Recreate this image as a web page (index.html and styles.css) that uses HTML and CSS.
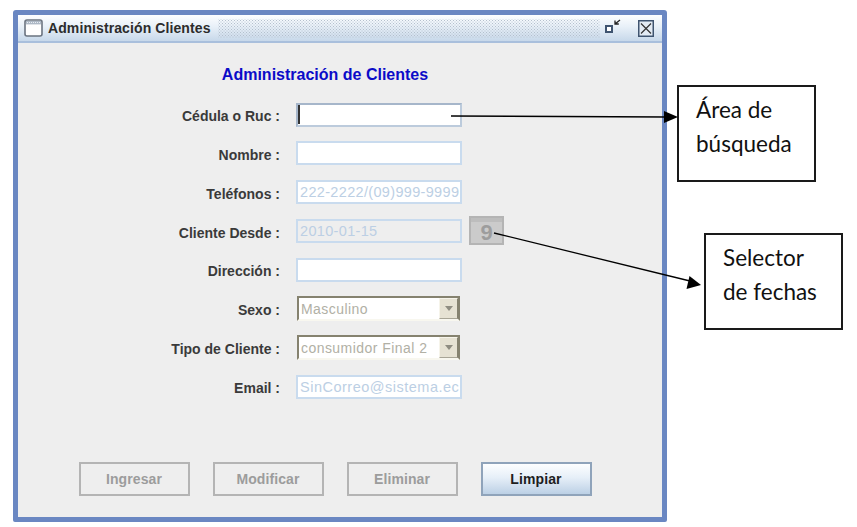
FILE: index.html
```html
<!DOCTYPE html>
<html lang="es">
<head>
<meta charset="utf-8">
<title>Administración Clientes</title>
<link rel="stylesheet" href="styles.css">
</head>
<body>
<main class="window">
  <header class="titlebar">
    <svg class="win-icon" width="19" height="18" viewBox="0 0 19 18"><rect x="1" y="1" width="17" height="16" rx="2" fill="#fff" stroke="#6b7480" stroke-width="1.6"/><rect x="2" y="2" width="15" height="3.4" fill="#aeb9c6"/><path d="M3 3.5h13" stroke="#e8edf3" stroke-dasharray="1 1"/></svg>
    <span class="title">Administración Clientes</span>
    <span class="dots"></span>
    <svg class="ctl-restore" width="18" height="17" viewBox="0 0 18 17"><rect x="2" y="8" width="6" height="6" fill="#fff" stroke="#3f5470" stroke-width="2"/><path d="M16 2l-5 4M11 2.500V6h3.800" fill="none" stroke="#222" stroke-width="1.300"/></svg>
    <svg class="ctl-close" width="16" height="17" viewBox="0 0 16 17"><rect x=".75" y=".75" width="14.500" height="15.500" fill="#e3ebf4" stroke="#3f5470" stroke-width="1.500"/><path d="M3 3.500l10 10M13 3.500l-10 10" stroke="#333" stroke-width="1.200"/></svg>
  </header>
  <section class="content">
    <h1 class="heading">Administración de Clientes</h1>
    <form class="form">
      <label class="lbl">Cédula o Ruc :</label>
      <div class="field focus"><span class="caret"></span></div>
      <label class="lbl">Nombre :</label>
      <div class="field"></div>
      <label class="lbl">Teléfonos :</label>
      <div class="field ghost">222-2222/(09)999-9999</div>
      <label class="lbl">Cliente Desde :</label>
      <div class="date-wrap">
        <div class="field ghost readonly">2010-01-15</div>
        <div class="cal"><span class="cal-top"></span><span class="cal-num">9</span></div>
      </div>
      <label class="lbl">Dirección :</label>
      <div class="field"></div>
      <label class="lbl">Sexo :</label>
      <div class="combo"><span class="combo-text">Masculino</span><span class="combo-btn"><i class="tri"></i></span></div>
      <label class="lbl">Tipo de Cliente :</label>
      <div class="combo"><span class="combo-text">consumidor Final 2</span><span class="combo-btn"><i class="tri"></i></span></div>
      <label class="lbl">Email :</label>
      <div class="field ghost mail">SinCorreo@sistema.ec</div>
    </form>
    <div class="buttons">
      <button class="btn" type="button">Ingresar</button>
      <button class="btn" type="button">Modificar</button>
      <button class="btn" type="button">Eliminar</button>
      <button class="btn primary" type="button">Limpiar</button>
    </div>
  </section>
</main>

<aside class="note note-a">Área de<br>búsqueda</aside>
<aside class="note note-b">Selector<br>de fechas</aside>

<svg class="arrows" width="857" height="527" viewBox="0 0 857 527">
  <path d="M451 116L666 117" stroke="#000" stroke-width="1.300" fill="none"/>
  <path d="M664 111l14 6-14 6z" fill="#000"/>
  <path d="M494 233L690 281" stroke="#000" stroke-width="1.300" fill="none"/>
  <path d="M701 285l-14.500 4 3-13z" fill="#000"/>
</svg>
</body>
</html>
```
FILE: styles.css
```css
* { box-sizing: border-box; }
html, body { margin: 0; height: 100%; background: #fff; }
body {
  position: relative;
  width: 857px;
  height: 527px;
  overflow: hidden;
  padding: 10px 0 0 13px;
  font-family: "Liberation Sans", Arial, sans-serif;
}
.window {
  width: 654px;
  height: 512px;
  border: 5px solid #6a87c2;
  border-radius: 3px 3px 2px 2px;
  display: flex;
  flex-direction: column;
  background: #eee;
}
.titlebar {
  height: 28px;
  flex: none;
  display: flex;
  align-items: center;
  padding: 0 6px 0 6px;
  background: linear-gradient(#fdfeff 0%, #e8f0f8 45%, #c7d8ea 100%);
  border-bottom: 2px solid #a9bfdc;
}
.win-icon { flex: none; }
.title {
  margin-left: 5px;
  font-size: 14px;
  font-weight: bold;
  color: #2c2c2c;
  letter-spacing: .1px;
  white-space: nowrap;
}
.dots {
  flex: none;
  width: 382px;
  height: 19px;
  margin-left: 7px;
  background-image: radial-gradient(#b4c0cd 0.7px, transparent 0.8px), radial-gradient(#b4c0cd 0.7px, transparent 0.8px);
  background-size: 3px 3px;
  background-position: 0 0, 1.500px 1.500px;
}
.ctl-restore { flex: none; margin-left: 4px; margin-top: -3px; }
.ctl-close { flex: none; margin-left: 16px; }
.content {
  flex: 1;
  display: flex;
  flex-direction: column;
  background: #eee;
}
.heading {
  margin: 23px 0 0;
  height: 18px;
  font-size: 16px;
  line-height: 18px;
  font-weight: bold;
  text-align: center;
  color: #0b0bc8;
  padding-right: 30px;
}
.form {
  margin: 18px 0 0 0;
  display: grid;
  grid-template-columns: 262px 1fr;
  grid-auto-rows: 25px;
  row-gap: 13.860px;
  column-gap: 16px;
  align-items: center;
}
.lbl {
  text-align: right;
  font-size: 14px;
  font-weight: bold;
  color: #3a3a3a;
  white-space: nowrap;
  padding-top: 3px;
}
.field {
  position: relative;
  width: 166px;
  height: 24px;
  background: #fff;
  border: 2px solid #c9dbee;
  font-size: 14.500px;
  line-height: 20px;
  padding-left: 2px;
  white-space: nowrap;
  overflow: hidden;
}
.field.focus { border: 2px solid #bccbdc; border-top-color: #a6b6ca; border-left-color: #a6b6ca; }
.caret { position: absolute; left: 0; top: 0; width: 2px; height: 19px; background: #333; }
.ghost { color: #bccfe4; letter-spacing: .33px; }
.readonly { background: #eee; }
.mail { letter-spacing: .5px; }
.date-wrap { display: flex; align-items: center; gap: 7px; }
.cal {
  width: 35px;
  height: 29px;
  flex: none;
  margin-top: -2px;
  background: #cbcbcb;
  border: 2px solid #b4b4b4;
  display: flex;
  flex-direction: column;
  align-items: center;
}
.cal-top { width: 100%; height: 4px; background: #bdbdbd; flex: none; }
.cal-num { font-size: 22px; line-height: 21px; font-weight: bold; color: #9d9d9d; }
.combo {
  width: 163px;
  height: 25px;
  margin-left: 1px;
  display: flex;
  align-items: stretch;
  background: #fff;
  border: 2px solid #85826f;
  border-bottom: 2px solid #f8f7ef;
}
.combo-text {
  flex: 1;
  font-size: 14px;
  line-height: 22px;
  padding-left: 2px;
  color: #b1b0a5;
  letter-spacing: .45px;
  white-space: nowrap;
  overflow: hidden;
}
.combo-btn {
  width: 19px;
  flex: none;
  background: #e6e2d3;
  border: 1px solid #f6f4ea;
  border-right-color: #85826f;
  border-bottom-color: #a8a596;
  display: flex;
  align-items: center;
  justify-content: center;
}
.tri { width: 0; height: 0; border: 4px solid transparent; border-top: 5px solid #8f8d82; border-bottom: 0; }
.buttons {
  margin: 63px 0 0 61px;
  display: flex;
  gap: 23px;
}
.btn {
  width: 111px;
  height: 34px;
  padding: 0 1px 0 0;
  font: bold 14px "Liberation Sans", Arial, sans-serif;
  letter-spacing: .1px;
  color: #9c9c9c;
  background: #eee;
  border: 2px solid #b4b4b4;
}
.btn.primary {
  color: #1e1e1e;
  background: linear-gradient(#fdfeff, #e6eff8 45%, #bcd0e5);
  border: 2px solid #8fa3ba;
}
.note {
  position: absolute;
  background: #fff;
  border: 2px solid #1a1a1a;
  font-family: Lato, "Noto Sans", sans-serif;
  font-size: 22.500px;
  line-height: 34px;
  color: #111;
}
.note-a { left: 677px; top: 85px; width: 139px; height: 97px; padding: 6px 0 0 17px; }
.note-b { left: 704px; top: 233px; width: 139px; height: 97px; padding: 6px 0 0 17px; }
.arrows { position: absolute; left: 0; top: 0; pointer-events: none; }
```
